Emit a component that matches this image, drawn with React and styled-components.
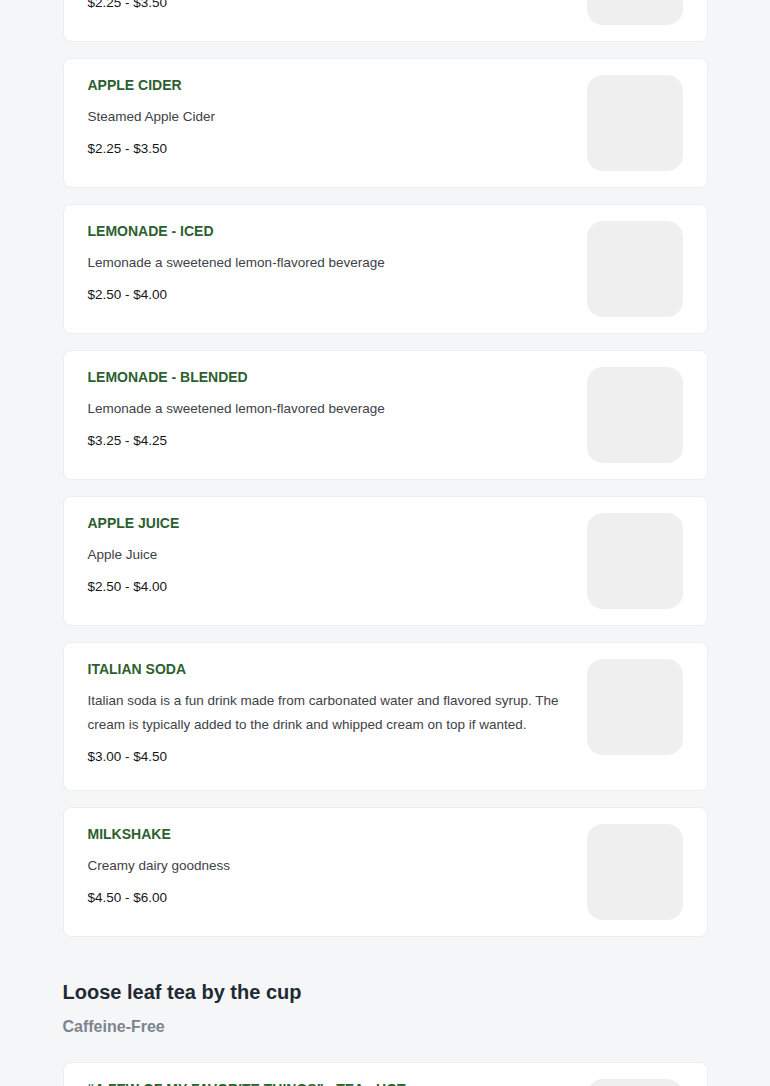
import styled, { createGlobalStyle } from "styled-components";

const GlobalStyle = createGlobalStyle`
    body {
        margin: 0;
        background-color: #f5f6f8;
        font-family: "Liberation Sans", Arial, sans-serif;
        overflow: hidden;
    }
`

const Page = styled.main`
    width: 645px;
    margin: 0 auto;
    margin-top: -88px;
`

const List = styled.div`
    display: flex;
    flex-direction: column;
    gap: 16px;
`

const Card = styled.article`
    display: flex;
    justify-content: space-between;
    gap: 24px;
    padding: 16px 24px;
    background-color: #ffffff;
    border: 1px solid #eceef0;
    border-radius: 8px;
`

const Info = styled.div`
    display: flex;
    flex-direction: column;
    padding-bottom: 7px;
`

const Name = styled.h3`
    margin: 0;
    font-size: 14px;
    line-height: 20px;
    font-weight: 700;
    color: #2d5f2f;
    text-transform: uppercase;
`

const Description = styled.p`
    margin: 10px 0 10px;
    font-size: 13.5px;
    line-height: 24px;
    color: #3d4247;
`

const Price = styled.span`
    font-size: 13.5px;
    line-height: 20px;
    color: #15181b;
`

const Thumb = styled.div`
    flex: 0 0 96px;
    width: 96px;
    height: 96px;
    border-radius: 16px;
    background-color: #efefef;
`

const Section = styled.section`
    margin-top: 43px;
`

const SectionTitle = styled.h2`
    margin: 0;
    font-size: 20px;
    line-height: 24px;
    font-weight: 700;
    color: #1f2a33;
`

const SectionSub = styled.div`
    margin: 13px 0 25px;
    font-size: 16px;
    line-height: 20px;
    font-weight: 700;
    color: #7c858e;
`

const drinks = [
  { name: "Hot Apple Cider", description: "Hot cider", price: "$2.25 - $3.50" },
  { name: "Apple Cider", description: "Steamed Apple Cider", price: "$2.25 - $3.50" },
  { name: "Lemonade - Iced", description: "Lemonade a sweetened lemon-flavored beverage", price: "$2.50 - $4.00" },
  { name: "Lemonade - Blended", description: "Lemonade a sweetened lemon-flavored beverage", price: "$3.25 - $4.25" },
  { name: "Apple Juice", description: "Apple Juice", price: "$2.50 - $4.00" },
  {
    name: "Italian Soda",
    description: "Italian soda is a fun drink made from carbonated water and flavored syrup. The cream is typically added to the drink and whipped cream on top if wanted.",
    price: "$3.00 - $4.50",
  },
  { name: "Milkshake", description: "Creamy dairy goodness", price: "$4.50 - $6.00" },
]

const teas = [
  { name: "“A Few of My Favorite Things” - Tea - Hot", description: "A caffeine-free herbal blend", price: "$3.00 - $4.00" },
]

function MenuItem({ item }) {
  return (
    <Card>
      <Info>
        <Name>{item.name}</Name>
        <Description>{item.description}</Description>
        <Price>{item.price}</Price>
      </Info>
      <Thumb />
    </Card>
  );
}

function App() {
  return (
    <>
      <GlobalStyle />
      <Page>
        <List>
          {drinks.map((d) => <MenuItem key={d.name} item={d} />)}
        </List>
        <Section>
          <SectionTitle>Loose leaf tea by the cup</SectionTitle>
          <SectionSub>Caffeine-Free</SectionSub>
          <List>
            {teas.map((t) => <MenuItem key={t.name} item={t} />)}
          </List>
        </Section>
      </Page>
    </>
  );
}

export default App;
